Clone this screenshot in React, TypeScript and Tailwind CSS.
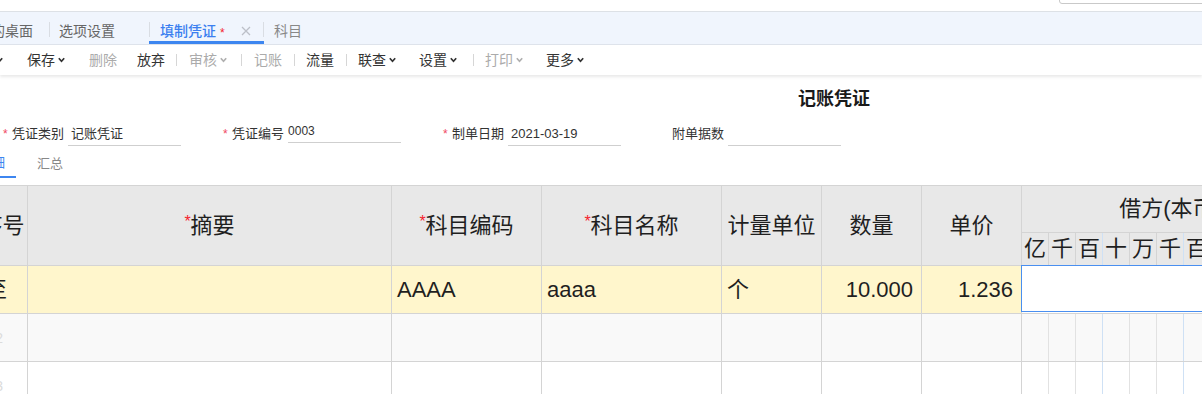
import React from "react";

const Chevron = ({ off }: { off?: boolean }) => (
  <svg
    width="7"
    height="6"
    viewBox="0 0 7 6"
    className={`ml-[3px] ${off ? "text-[#b0b0b0]" : "text-[#333]"}`}
  >
    <path d="M0.8 1.2 3.5 4.3 6.2 1.2" fill="none" stroke="currentColor" strokeWidth="1.7" />
  </svg>
);

const tools = [
  { label: "新增", chev: true, ml: "ml-[-35px]" },
  { label: "保存", chev: true, ml: "ml-[24px]" },
  { label: "删除", off: true, ml: "ml-[24px]" },
  { label: "放弃", ml: "ml-[20px]" },
  { sep: true, ml: "ml-[11px]" },
  { label: "审核", chev: true, off: true, ml: "ml-[12px]" },
  { sep: true, ml: "ml-[14px]" },
  { label: "记账", off: true, ml: "ml-[12px]" },
  { sep: true, ml: "ml-[12px]" },
  { label: "流量", ml: "ml-[11px]" },
  { sep: true, ml: "ml-[12px]" },
  { label: "联查", chev: true, ml: "ml-[11px]" },
  { label: "设置", chev: true, ml: "ml-[23px]" },
  { sep: true, ml: "ml-[16px]" },
  { label: "打印", chev: true, off: true, ml: "ml-[11px]" },
  { label: "更多", chev: true, ml: "ml-[23px]" },
];

const units = ["亿", "千", "百", "十", "万", "千", "百", "十", "元", "角", "分"];

function Star() {
  return <span className="text-[16px] text-[#f5222d] relative top-[-4px]">*</span>;
}

function DebitCells({ header }: { header?: boolean }) {
  return (
    <div className="flex h-full">
      {units.map((u, i) => (
        <div
          key={i}
          className={`w-[27px] shrink-0 border-r flex items-center justify-center ${
            i % 3 === 2 ? "border-[#cfe1f5]" : header ? "border-[#d4d4d4]" : "border-[#e2e2e2]"
          }`}
        >
          {header ? u : ""}
        </div>
      ))}
    </div>
  );
}

export default function App() {
  return (
    <div className="w-[1202px] h-[394px] overflow-hidden bg-white font-['Liberation_Sans','Noto_Sans_CJK_SC',sans-serif] text-[#333]">
      {/* top strip */}
      <div className="relative h-[12px] border-b border-[#dde1e6]">
        <div className="absolute left-[1059px] top-[-20px] h-[24px] w-[200px] rounded-[3px] border border-[#c9c9c9] bg-white" />
      </div>

      {/* tab bar */}
      <div className="flex h-[33px] items-stretch border-b border-[#dfe4ec] bg-[#f0f5fd] text-[14px] leading-none">
        <div className="ml-[-33px] flex w-[82px] shrink-0 items-center pl-[10px] pt-[5px] text-[#666]">我的桌面</div>
        <span className="mt-[10px] h-[15px] w-px bg-[#d9dde3]" />
        <div className="flex w-[99px] shrink-0 items-center pl-[9px] pt-[5px] text-[#666]">选项设置</div>
        <span className="mt-[10px] h-[15px] w-px bg-[#d9dde3]" />
        <div className="relative flex w-[113px] shrink-0 items-center pl-[10px] pt-[5px]">
          <span className="font-medium text-[#3b7ff0]">填制凭证</span>
          <span className="ml-[4px] self-start pt-[10px] text-[12px] text-[#f5222d]">*</span>
          <svg width="10" height="10" viewBox="0 0 10 10" className="ml-[16px]">
            <path d="M1 1 9 9M9 1 1 9" stroke="#bcc0c8" strokeWidth="1.3" />
          </svg>
          <span className="absolute bottom-0 left-[-1px] h-[3px] w-[115px] bg-[#3d86f0]" />
        </div>
        <span className="mt-[10px] h-[15px] w-px bg-[#d9dde3]" />
        <div className="flex items-center pl-[10px] pt-[5px] text-[#888]">科目</div>
      </div>

      {/* toolbar */}
      <div className="relative z-10 flex h-[30px] items-center bg-white text-[14px] leading-none shadow-[0_2px_3px_rgba(0,0,0,0.09)]">
        {tools.map((t, i) =>
          t.sep ? (
            <span key={i} className={`h-[12px] w-px shrink-0 bg-[#d6d6d6] ${t.ml}`} />
          ) : (
            <div
              key={i}
              className={`flex shrink-0 items-center ${t.ml} ${t.off ? "text-[#ababab]" : "text-[#333]"}`}
            >
              {t.label}
              {t.chev && <Chevron off={t.off} />}
            </div>
          )
        )}
      </div>

      {/* title */}
      <div className="flex h-[47px] items-center pl-[798px] text-[18px] font-bold leading-none text-[#1a1a1a]">
        记账凭证
      </div>

      {/* form */}
      <div className="flex h-[24px] items-start text-[13px] leading-[24px]">
        <span className="ml-[3px] w-[9px] text-[12px] text-[#f04864]">*</span>
        <span>凭证类别</span>
        <div className="ml-[4px] h-[24px] w-[113px] border-b border-[#cfcfcf] pl-[3px]">记账凭证</div>

        <span className="ml-[42px] w-[9px] text-[12px] text-[#f04864]">*</span>
        <span>凭证编号</span>
        <div className="ml-[4px] h-[21px] w-[113px] border-b border-[#cfcfcf] text-[12px] leading-[19px]">0003</div>

        <span className="ml-[42px] w-[9px] text-[12px] text-[#f04864]">*</span>
        <span>制单日期</span>
        <div className="ml-[4px] h-[24px] w-[113px] border-b border-[#cfcfcf] pl-[3px]">2021-03-19</div>

        <span className="ml-[42px] w-[9px]" />
        <span>附单据数</span>
        <div className="ml-[4px] h-[24px] w-[113px] border-b border-[#cfcfcf]" />
      </div>

      {/* detail / summary tabs */}
      <div className="mt-[2px] flex h-[30px] text-[13px] leading-none">
        <div className="ml-[-32px] flex items-center border-b-2 border-[#3d86f0] px-[11px] text-[#3d86f0]">明细</div>
        <div className="ml-[10px] flex items-center px-[11px] text-[#888]">汇总</div>
      </div>

      {/* table */}
      <div className="ml-[-22px] mt-[7px] w-[1300px] border-t border-[#d4d4d4] text-[22px] leading-none text-[#1f1f1f]">
        <div className="flex h-[80px] bg-[#e8e8e8]">
          <div className="flex w-[50px] shrink-0 items-center justify-center border-b border-r border-[#d4d4d4]">序号</div>
          <div className="flex w-[364px] shrink-0 items-center justify-center border-b border-r border-[#d4d4d4]">
            <Star />摘要
          </div>
          <div className="flex w-[150px] shrink-0 items-center justify-center border-b border-r border-[#d4d4d4]">
            <Star />科目编码
          </div>
          <div className="flex w-[180px] shrink-0 items-center justify-center border-b border-r border-[#d4d4d4]">
            <Star />科目名称
          </div>
          <div className="flex w-[100px] shrink-0 items-center justify-center border-b border-r border-[#d4d4d4]">计量单位</div>
          <div className="flex w-[100px] shrink-0 items-center justify-center border-b border-r border-[#d4d4d4]">数量</div>
          <div className="flex w-[100px] shrink-0 items-center justify-center border-b border-r border-[#d4d4d4]">单价</div>
          <div className="flex w-[297px] shrink-0 flex-col border-b border-[#d4d4d4]">
            <div className="flex h-[47px] items-center justify-center border-b border-[#d4d4d4]">借方(本币)</div>
            <div className="h-[32px]">
              <DebitCells header />
            </div>
          </div>
        </div>

        {/* row 1 */}
        <div className="flex h-[48px] bg-[#fff6cc]">
          <div className="flex w-[50px] shrink-0 items-center justify-end border-b border-r border-[#d4d4d4] pr-[20px]">至</div>
          <div className="w-[364px] shrink-0 border-b border-r border-[#d4d4d4]" />
          <div className="flex w-[150px] shrink-0 items-center border-b border-r border-[#d4d4d4] pl-[5px]">AAAA</div>
          <div className="flex w-[180px] shrink-0 items-center border-b border-r border-[#d4d4d4] pl-[5px]">aaaa</div>
          <div className="flex w-[100px] shrink-0 items-center border-b border-r border-[#d4d4d4] pl-[5px]">个</div>
          <div className="flex w-[100px] shrink-0 items-center justify-end border-b border-r border-[#d4d4d4] pr-[8px]">10.000</div>
          <div className="flex w-[100px] shrink-0 items-center justify-end border-b border-r border-[#d4d4d4] pr-[8px]">1.236</div>
          <div className="relative w-[297px] shrink-0 border-b border-[#d4d4d4] bg-white">
            <div className="absolute bottom-[1px] left-[-1px] right-0 top-[-1px] border border-[#4a8ff0]" />
          </div>
        </div>

        {/* rows 2, 3 */}
        {[
          { n: "2", bg: "bg-[#f9f9f9]" },
          { n: "3", bg: "bg-white" },
        ].map((r) => (
          <div key={r.n} className={`flex h-[48px] ${r.bg}`}>
            <div className="flex w-[50px] shrink-0 items-center justify-end border-b border-r border-[#d4d4d4] pr-[24px] text-[14px] text-[#dcdcdc]">
              {r.n}
            </div>
            <div className="w-[364px] shrink-0 border-b border-r border-[#d4d4d4]" />
            <div className="w-[150px] shrink-0 border-b border-r border-[#d4d4d4]" />
            <div className="w-[180px] shrink-0 border-b border-r border-[#d4d4d4]" />
            <div className="w-[100px] shrink-0 border-b border-r border-[#d4d4d4]" />
            <div className="w-[100px] shrink-0 border-b border-r border-[#d4d4d4]" />
            <div className="w-[100px] shrink-0 border-b border-r border-[#d4d4d4]" />
            <div className="w-[297px] shrink-0 border-b border-[#d4d4d4]">
              <DebitCells />
            </div>
          </div>
        ))}
      </div>
    </div>
  );
}
